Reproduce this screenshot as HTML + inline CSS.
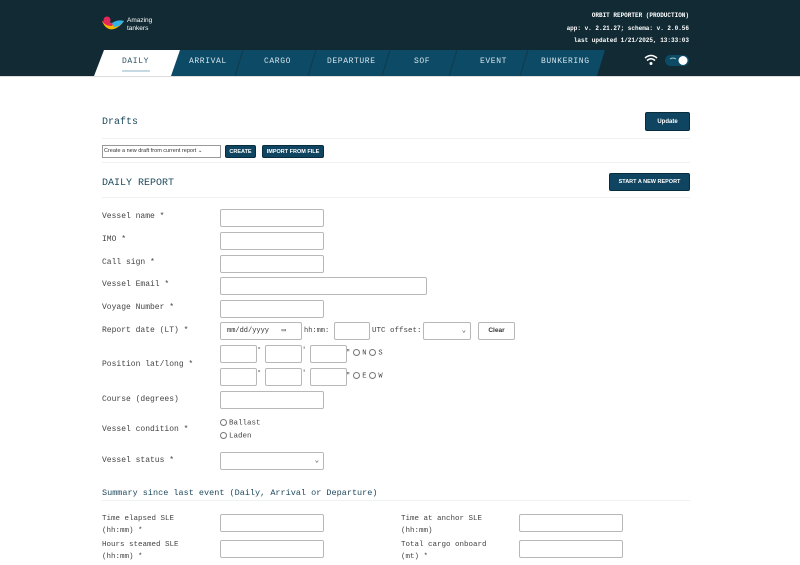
<!DOCTYPE html>
<html><head><style>
body{margin:0;width:800px;height:565px;overflow:hidden;background:#fff;font-family:"Liberation Mono",monospace;position:relative}
.a{position:absolute}
.hdr{left:0;top:0;width:800px;height:76px;background:#112a33}
.l{position:absolute;left:102px;font-size:8px;color:#444;line-height:12px}
.in{position:absolute;height:16px;border:1px solid #b8b8b8;border-radius:2px;background:#fff}
.btn{position:absolute;background:#0f4560;color:#fff;font-family:"Liberation Sans",sans-serif;font-weight:bold;font-size:5.5px;border-radius:2px;border:1px solid #0a2d3e;display:flex;align-items:center;justify-content:center;box-sizing:border-box}
.t{position:absolute;font-size:8px;color:#d5e3ea;letter-spacing:.6px;top:57px}
.rad{display:inline-block;width:5px;height:5px;border:1px solid #777;border-radius:50%;vertical-align:middle;margin:0 2px 0 3px}
.sm{position:absolute;font-size:7px;color:#444}
</style></head><body>
<div class="a hdr"></div>
<svg class="a" style="left:100px;top:15px" width="26" height="18"><path d="M2 6 Q6 16 14 14 Q20 12 24 6 Q18 9 12 8 Q6 7 2 6Z" fill="#f5b800"/><path d="M2 6 Q8 8 14 8 L12 11 Q5 11 2 6Z" fill="#e5275a"/><path d="M12 8 Q18 4 24 6 Q20 12 14 12Z" fill="#33b0e6"/><circle cx="7" cy="5" r="3.5" fill="#e5275a"/></svg>
<div class="a" style="left:127px;top:17px;font-family:'Liberation Sans',sans-serif;font-size:6.5px;color:#fff;line-height:8px">Amazing<br>tankers</div>
<div class="a" style="right:111px;top:10px;font-size:6px;color:#fff;text-align:right;line-height:12.5px;font-weight:bold">ORBIT REPORTER (PRODUCTION)<br>app: v. 2.21.27; schema: v. 2.0.56<br>last updated 1/21/2025, 13:33:03</div>
<svg class="a" style="left:0;top:50px" width="800" height="27">
<polygon points="172,0 605,0 597,26 163,26" fill="#0c4a66"/>
<g stroke="#123a4c" stroke-width="1"><line x1="243" y1="0" x2="235" y2="26"/><line x1="316" y1="0" x2="308" y2="26"/><line x1="390" y1="0" x2="382" y2="26"/><line x1="457" y1="0" x2="449" y2="26"/><line x1="528" y1="0" x2="520" y2="26"/></g>
<polygon points="104,0 180,0 171,26 94,26" fill="#fff"/>
<rect x="0" y="26" width="800" height="1" fill="#ddd"/>
<line x1="122" y1="21" x2="150" y2="21" stroke="#8fb3c4" stroke-width="1"/>
</svg>
<div class="t" style="left:122px;color:#2c5163">DAILY</div>
<div class="t" style="left:189px">ARRIVAL</div>
<div class="t" style="left:264px">CARGO</div>
<div class="t" style="left:327px">DEPARTURE</div>
<div class="t" style="left:414px">SOF</div>
<div class="t" style="left:480px">EVENT</div>
<div class="t" style="left:541px">BUNKERING</div>
<svg class="a" style="left:643px;top:54px" width="48" height="13"><g fill="none" stroke="#fff" stroke-width="1.5"><path d="M2 4 Q8 -1 14 4"/><path d="M4 6.5 Q8 3 12 6.5"/></g><circle cx="8" cy="9.5" r="1.5" fill="#fff"/><rect x="22" y="1" width="24" height="11" rx="5.5" fill="#0c4a66"/><circle cx="40" cy="6.5" r="4.5" fill="#fff"/><path d="M27 5 Q30 3 33 5" stroke="#9cc" fill="none"/></svg>
<div class="a" style="left:102px;top:117px;font-size:10px;color:#1f4a5e">Drafts</div>
<div class="btn" style="left:645px;top:112px;width:45px;height:19px;font-size:6px">Update</div>
<div class="a" style="left:102px;top:138px;width:588px;height:1px;background:#eef2f3"></div>
<div class="a" style="left:102px;top:145px;width:116px;height:11px;border:1px solid #999;font-family:'Liberation Sans',sans-serif;font-size:5.5px;line-height:11px;color:#333;padding-left:1px">Create a new draft from current report ⌄</div>
<div class="btn" style="left:225px;top:145px;width:31px;height:13px">CREATE</div>
<div class="btn" style="left:262px;top:145px;width:62px;height:13px">IMPORT FROM FILE</div>
<div class="a" style="left:102px;top:162px;width:588px;height:1px;background:#eef2f3"></div>
<div class="a" style="left:102px;top:178px;font-size:10px;color:#1f4a5e">DAILY REPORT</div>
<div class="btn" style="left:609px;top:173px;width:81px;height:18px">START A NEW REPORT</div>
<div class="a" style="left:102px;top:197px;width:588px;height:1px;background:#eef2f3"></div>

<div class="l" style="top:211px">Vessel name *</div><div class="in" style="left:220px;top:209px;width:102px"></div>
<div class="l" style="top:234px">IMO *</div><div class="in" style="left:220px;top:232px;width:102px"></div>
<div class="l" style="top:257px">Call sign *</div><div class="in" style="left:220px;top:255px;width:102px"></div>
<div class="l" style="top:279px">Vessel Email *</div><div class="in" style="left:220px;top:277px;width:205px"></div>
<div class="l" style="top:302px">Voyage Number *</div><div class="in" style="left:220px;top:300px;width:102px"></div>
<div class="l" style="top:325px">Report date (LT) *</div>
<div class="in" style="left:220px;top:322px;font-size:7px;line-height:16px;color:#333;padding-left:6px;width:74px">mm/dd/yyyy &nbsp;&nbsp;▭</div>
<div class="sm" style="left:304px;top:327px">hh:mm:</div><div class="in" style="left:334px;top:322px;width:34px"></div>
<div class="sm" style="left:372px;top:327px;font-size:7.5px">UTC offset:</div><div class="in" style="left:423px;top:322px;width:46px;font-size:7px;line-height:16px;text-align:right;color:#333"><span style="padding-right:4px">⌄</span></div>
<div class="in" style="left:478px;top:322px;width:35px;font-family:'Liberation Sans',sans-serif;font-size:6.5px;line-height:16px;text-align:center;font-weight:bold;color:#333">Clear</div>
<div class="l" style="top:359px">Position lat/long *</div>
<div class="in" style="left:220px;top:345px;width:35px"></div><div class="sm" style="left:257px;top:347px">°</div>
<div class="in" style="left:265px;top:345px;width:35px"></div><div class="sm" style="left:302px;top:347px">′</div>
<div class="in" style="left:310px;top:345px;width:35px"></div><div class="sm" style="left:346px;top:349px">″<span class="rad"></span>N<span class="rad"></span>S</div>
<div class="in" style="left:220px;top:368px;width:35px"></div><div class="sm" style="left:257px;top:370px">°</div>
<div class="in" style="left:265px;top:368px;width:35px"></div><div class="sm" style="left:302px;top:370px">′</div>
<div class="in" style="left:310px;top:368px;width:35px"></div><div class="sm" style="left:346px;top:372px">″<span class="rad"></span>E<span class="rad"></span>W</div>
<div class="l" style="top:394px">Course (degrees)</div><div class="in" style="left:220px;top:391px;width:102px"></div>
<div class="sm" style="left:217px;top:419px;font-size:7.5px"><span class="rad"></span>Ballast</div>
<div class="sm" style="left:217px;top:432px;font-size:7.5px"><span class="rad"></span>Laden</div>
<div class="l" style="top:424px">Vessel condition *</div>
<div class="l" style="top:455px">Vessel status *</div><div class="in" style="left:220px;top:452px;width:102px;font-size:7px;line-height:16px;text-align:right;color:#333"><span style="padding-right:4px">⌄</span></div>
<div class="a" style="left:102px;top:488px;font-size:8.5px;color:#1f4a5e">Summary since last event (Daily, Arrival or Departure)</div>
<div class="a" style="left:102px;top:500px;width:588px;height:1px;background:#eef2f3"></div>
<div class="l" style="top:513px;font-size:7.5px">Time elapsed SLE<br>(hh:mm) *</div><div class="in" style="left:220px;top:514px;width:102px"></div>
<div class="l" style="top:539px;font-size:7.5px">Hours steamed SLE<br>(hh:mm) *</div><div class="in" style="left:220px;top:540px;width:102px"></div>
<div class="l" style="left:401px;top:513px;font-size:7.5px">Time at anchor SLE<br>(hh:mm)</div><div class="in" style="left:519px;top:514px;width:102px"></div>
<div class="l" style="left:401px;top:539px;font-size:7.5px">Total cargo onboard<br>(mt) *</div><div class="in" style="left:519px;top:540px;width:102px"></div>
</body></html>
